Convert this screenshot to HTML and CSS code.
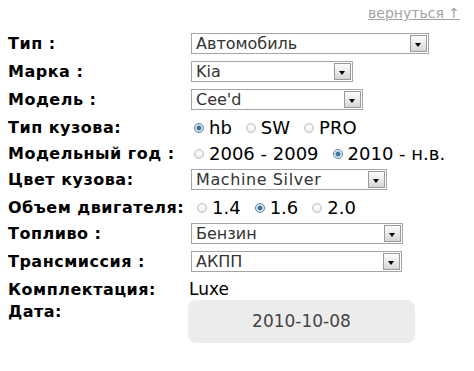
FILE: index.html
```html
<!DOCTYPE html>
<html lang="ru">
<head>
    <meta charset="UTF-8">
    <title>Параметры автомобиля</title>
    <link rel="stylesheet" href="styles.css">
</head>
<body>
    <div class="page">
        <div class="top">
            <a class="back" href="#">вернуться ↑</a>
        </div>

        <div class="form">
            <div class="row">
                <div class="label">Тип :</div>
                <div class="field">
                    <span class="select sel-type"><span class="value">Автомобиль</span><span class="btn"></span></span>
                </div>
            </div>
            <div class="row">
                <div class="label">Марка :</div>
                <div class="field">
                    <span class="select sel-make"><span class="value">Kia</span><span class="btn"></span></span>
                </div>
            </div>
            <div class="row">
                <div class="label">Модель :</div>
                <div class="field">
                    <span class="select sel-model"><span class="value">Cee'd</span><span class="btn"></span></span>
                </div>
            </div>
            <div class="row radio-row">
                <div class="label">Тип кузова:</div>
                <div class="field radios">
                    <label class="radio"><span class="dot on"></span>hb</label>
                    <label class="radio"><span class="dot"></span>SW</label>
                    <label class="radio"><span class="dot"></span>PRO</label>
                </div>
            </div>
            <div class="row radio-row">
                <div class="label">Модельный год :</div>
                <div class="field radios">
                    <label class="radio"><span class="dot"></span>2006 - 2009</label>
                    <label class="radio"><span class="dot on"></span>2010 - н.в.</label>
                </div>
            </div>
            <div class="row">
                <div class="label">Цвет кузова:</div>
                <div class="field">
                    <span class="select sel-color"><span class="value latin">Machine Silver</span><span class="btn"></span></span>
                </div>
            </div>
            <div class="row radio-row">
                <div class="label">Объем двигателя:</div>
                <div class="field radios wide">
                    <label class="radio"><span class="dot"></span>1.4</label>
                    <label class="radio"><span class="dot on"></span>1.6</label>
                    <label class="radio"><span class="dot"></span>2.0</label>
                </div>
            </div>
            <div class="row">
                <div class="label">Топливо :</div>
                <div class="field">
                    <span class="select sel-fuel"><span class="value">Бензин</span><span class="btn"></span></span>
                </div>
            </div>
            <div class="row">
                <div class="label">Трансмиссия :</div>
                <div class="field">
                    <span class="select sel-gear"><span class="value">АКПП</span><span class="btn"></span></span>
                </div>
            </div>
            <div class="row text-row">
                <div class="label">Комплектация:</div>
                <div class="field plain">Luxe</div>
            </div>
            <div class="row last-row">
                <div class="label">Дата:</div>
                <div class="field">
                    <div class="date">2010-10-08</div>
                </div>
            </div>
        </div>
    </div>
</body>
</html>
```

FILE: styles.css
```css
body {
    margin: 0;
    background: #fff;
    font-family: "DejaVu Sans", Verdana, sans-serif;
    color: #000;
}
.page {
    width: 452px;
    padding: 3px 0 20px 8px;
}
.top {
    text-align: right;
    height: 30px;
}
.back {
    font-size: 14px;
    color: #a3a3a3;
    text-decoration: underline;
}

.form {
    display: flex;
    flex-direction: column;
}
.row {
    display: flex;
    align-items: flex-start;
    height: 28px;
}
.radio-row { height: 26px; }
.text-row { height: 22px; }
.last-row { height: auto; }
.label {
    width: 183px;
    flex: none;
    font-size: 16px;
    font-weight: bold;
    letter-spacing: 0.5px;
    line-height: 21px;
}
.field {
    font-size: 18px;
    line-height: 21px;
}
.plain {
    margin-left: -2px;
    font-size: 17px;
}

/* fake select boxes */
.select {
    display: flex;
    height: 21px;
    box-sizing: border-box;
    border: 1px solid #a5a5a5;
    background: #fff;
}
.select .value {
    flex: 1;
    padding-left: 4px;
    font-size: 16px;
    line-height: 19px;
    color: #333;
}
.select .value.latin { letter-spacing: 0.6px; }
.select .btn {
    width: 15px;
    margin: 1px;
    border: 1px solid #9a9a9a;
    background: linear-gradient(#fdfdfd, #d6d6d6);
    position: relative;
}
.select .btn::after {
    content: '';
    position: absolute;
    left: 4px;
    top: 7px;
    border-style: solid;
    border-width: 4px 3.5px 0 3.5px;
    border-color: #000 transparent transparent transparent;
}
.sel-type { width: 238px; }
.sel-make { width: 162px; }
.sel-model { width: 172px; }
.sel-color { width: 196px; }
.sel-fuel { width: 212px; }
.sel-gear { width: 211px; }

/* radios */
.radios {
    display: flex;
    gap: 14px;
}
.radio {
    display: flex;
    align-items: center;
    gap: 5px;
}
.dot {
    width: 10px;
    height: 10px;
    box-sizing: border-box;
    border-radius: 50%;
    border: 1px solid #bdbdbd;
    background: radial-gradient(circle at 50% 40%, #fff, #e4e4e4);
    margin-top: 1px;
}
.radios .radio:first-child .dot { margin-left: 3px; }
.radios.wide .radio:first-child .dot { margin-left: 6px; }
.dot.on {
    border-color: #5c7e95;
    background: radial-gradient(circle, #235f8a 0, #3d86b8 2px, #dfe9f0 3px, #f4f7f9 5px);
}

.date {
    width: 227px;
    height: 43px;
    margin-top: -1px;
    margin-left: -3px;
    background: #ececec;
    border-radius: 8px;
    text-align: center;
    line-height: 43px;
    font-size: 17px;
    color: #444;
}
```
